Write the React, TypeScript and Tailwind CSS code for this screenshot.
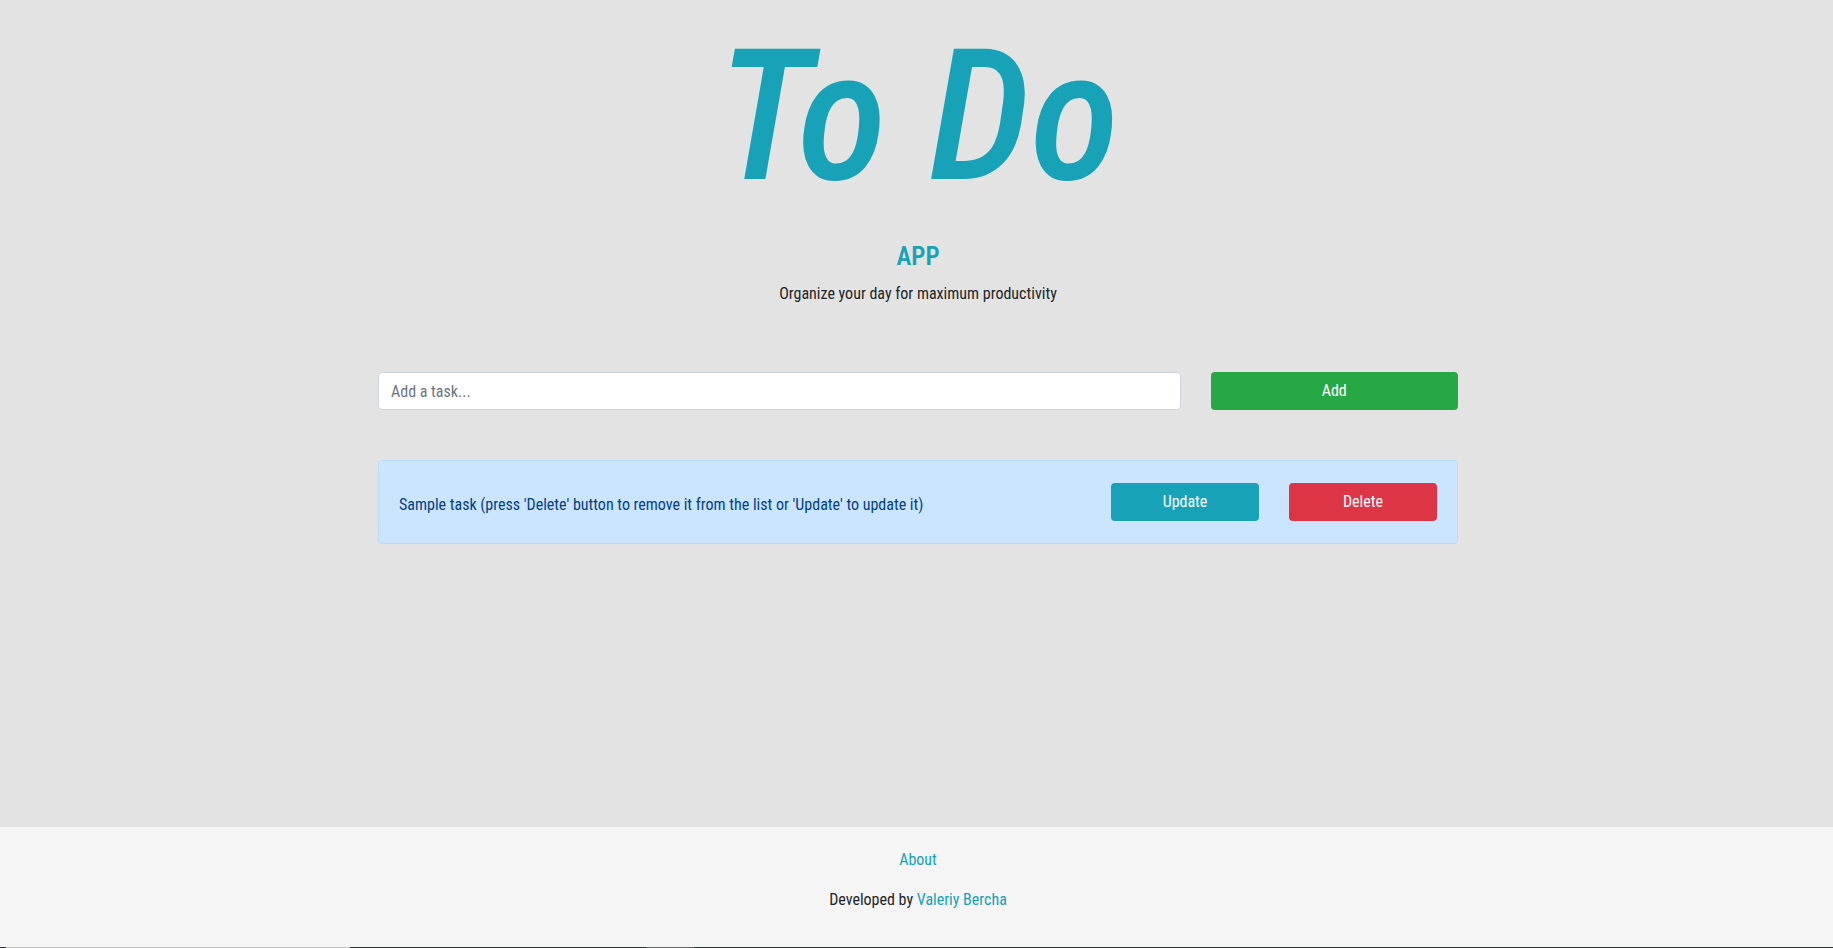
import React, { useState } from "react";

const button =
  "h-[38px] rounded-[4px] px-3 text-base leading-6 text-white cursor-pointer";

export default function App() {
  const [task, setTask] = useState("");

  return (
    <div className="flex min-h-screen flex-col bg-[#e3e3e3] font-['Roboto_Condensed','Liberation_Sans_Narrow',Roboto,sans-serif] text-base leading-6 text-[#212529]">
      <main className="grow pl-[3px]">
        <div className="mx-auto w-full max-w-[1140px] px-[30px]">
          <header className="pt-4 text-center">
            <h1 className="text-[184px] leading-[200px] font-medium italic text-[#17a2b8]">
              To Do
            </h1>
            <h2 className="mt-6 text-[25px] leading-[34px] font-semibold text-[#17a2b8]">
              APP
            </h2>
            <p className="mt-2">Organize your day for maximum productivity</p>
          </header>

          <form
            className="mt-[66px] grid grid-cols-12 gap-x-[30px]"
            onSubmit={(e) => e.preventDefault()}
          >
            <input
              type="text"
              aria-label="Add a task"
              placeholder="Add a task..."
              value={task}
              onChange={(e) => setTask(e.target.value)}
              className="col-span-9 h-[38px] rounded-[4px] border border-[#ced4da] bg-white px-3 text-[#495057] placeholder:text-[#6c757d]"
            />
            <button type="submit" className={`${button} col-span-3 bg-[#28a745]`}>
              Add
            </button>
          </form>

          <ul className="mt-[50px]">
            <li className="grid grid-cols-12 gap-x-[30px] rounded-[4px] border border-[#b8daff] bg-[#cce5ff] px-5 py-[22px] text-[#004085]">
              <span className="col-span-8 pt-[10px]">
                Sample task (press 'Delete' button to remove it from the list or
                'Update' to update it)
              </span>
              <button type="button" className={`${button} col-span-2 bg-[#17a2b8]`}>
                Update
              </button>
              <button type="button" className={`${button} col-span-2 bg-[#dc3545]`}>
                Delete
              </button>
            </li>
          </ul>
        </div>
      </main>

      <footer className="bg-[#f5f5f5] text-center">
        <div className="pt-[21px] pb-[35px] pl-[3px]">
          <p>
            <a href="#about" className="text-[#17a2b8]">
              About
            </a>
          </p>
          <p className="mt-4">
            Developed by{" "}
            <a href="#author" className="text-[#17a2b8]">
              Valeriy Bercha
            </a>
          </p>
        </div>
        <div className="flex h-px bg-[#20363b]">
          <div className="ml-1.5 w-[344px] bg-[#c0c0c0]" />
          <div className="ml-[296px] w-12 bg-[#566669]" />
        </div>
      </footer>
    </div>
  );
}
